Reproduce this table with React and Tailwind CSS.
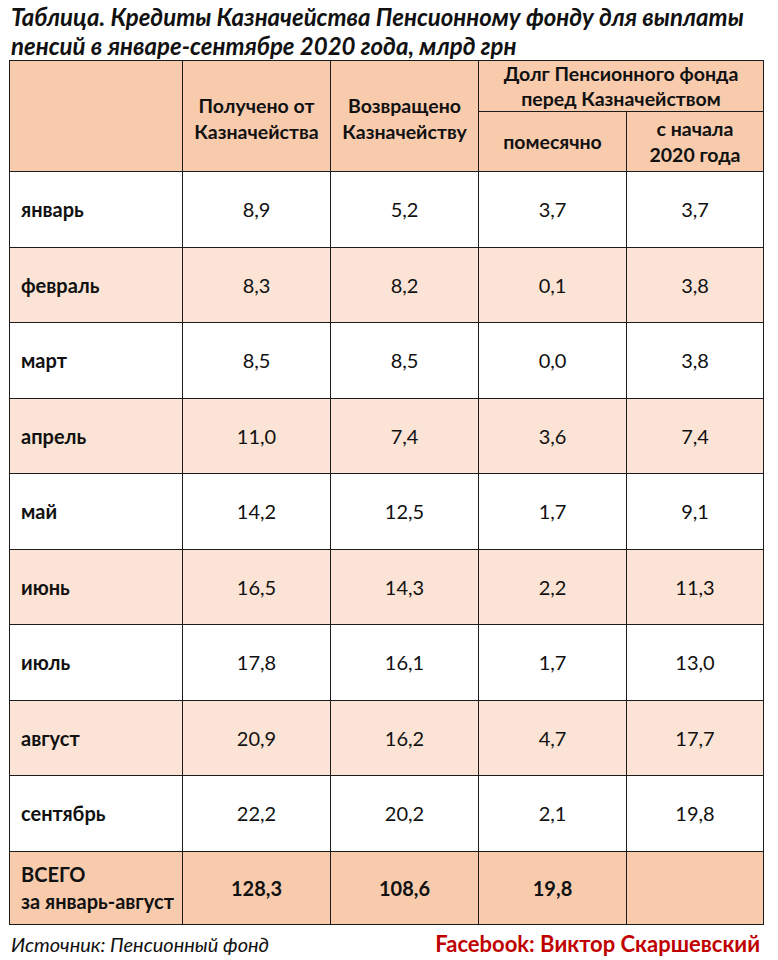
import React from "react";

const rows = [
  ["январь", "8,9", "5,2", "3,7", "3,7"],
  ["февраль", "8,3", "8,2", "0,1", "3,8"],
  ["март", "8,5", "8,5", "0,0", "3,8"],
  ["апрель", "11,0", "7,4", "3,6", "7,4"],
  ["май", "14,2", "12,5", "1,7", "9,1"],
  ["июнь", "16,5", "14,3", "2,2", "11,3"],
  ["июль", "17,8", "16,1", "1,7", "13,0"],
  ["август", "20,9", "16,2", "4,7", "17,7"],
  ["сентябрь", "22,2", "20,2", "2,1", "19,8"],
];

const bd = "border-[1.5px] border-[#1c1c1c]";

export default function App() {
  return (
    <div
      className="w-[778px] h-[960px] bg-white text-[#111] overflow-hidden"
      style={{ fontFamily: "Lato, 'Noto Sans', sans-serif" }}
    >
      <div className="pl-[11px] pt-[2px] text-[24px] leading-[29px] font-bold italic whitespace-nowrap">
        <div>Таблица. Кредиты Казначейства Пенсионному фонду для выплаты</div>
        <div>пенсий в январе-сентябре 2020 года, млрд грн</div>
      </div>
      <table className="ml-[9px] table-fixed border-collapse w-[754px] text-[20px]">
        <colgroup>
          <col className="w-[173px]" />
          <col className="w-[148px]" />
          <col className="w-[148px]" />
          <col className="w-[148px]" />
          <col className="w-[137px]" />
        </colgroup>
        <thead className="text-[19.5px]">
          <tr className="h-[51px] bg-[#f8cbad]">
            <th rowSpan={2} className={bd}></th>
            <th rowSpan={2} className={`${bd} leading-[26px] pt-[6px] font-bold`}>
              Получено от<br />Казначейства
            </th>
            <th rowSpan={2} className={`${bd} leading-[26px] pt-[6px] font-bold`}>
              Возвращено<br />Казначейству
            </th>
            <th colSpan={2} className={`${bd} leading-[25px] font-bold`}>
              Долг Пенсионного фонда<br />перед Казначейством
            </th>
          </tr>
          <tr className="h-[60px] bg-[#f8cbad]">
            <th className={`${bd} font-bold`}>помесячно</th>
            <th className={`${bd} leading-[26px] font-bold`}>
              с начала<br />2020 года
            </th>
          </tr>
        </thead>
        <tbody>
          {rows.map((r, i) => (
            <tr key={r[0]} className={`h-[75.5px] ${i % 2 === 1 ? "bg-[#fbe4d5]" : "bg-white"}`}>
              <td className={`${bd} pl-[11px] font-bold`}>{r[0]}</td>
              <td className={`${bd} text-center`}>{r[1]}</td>
              <td className={`${bd} text-center`}>{r[2]}</td>
              <td className={`${bd} text-center`}>{r[3]}</td>
              <td className={`${bd} text-center`}>{r[4]}</td>
            </tr>
          ))}
          <tr className="h-[73px] bg-[#f8cbad] font-bold">
            <td className={`${bd} pl-[11px] leading-[27px]`}>
              ВСЕГО<br />за январь-август
            </td>
            <td className={`${bd} text-center`}>128,3</td>
            <td className={`${bd} text-center`}>108,6</td>
            <td className={`${bd} text-center`}>19,8</td>
            <td className={bd}></td>
          </tr>
        </tbody>
      </table>
      <div className="flex justify-between items-baseline pl-[11px] pr-[18px] pt-[2px] whitespace-nowrap">
        <span className="italic text-[20px]">Источник: Пенсионный фонд</span>
        <span className="font-bold text-[22px] text-[#c00000]">Facebook: Виктор Скаршевский</span>
      </div>
    </div>
  );
}
